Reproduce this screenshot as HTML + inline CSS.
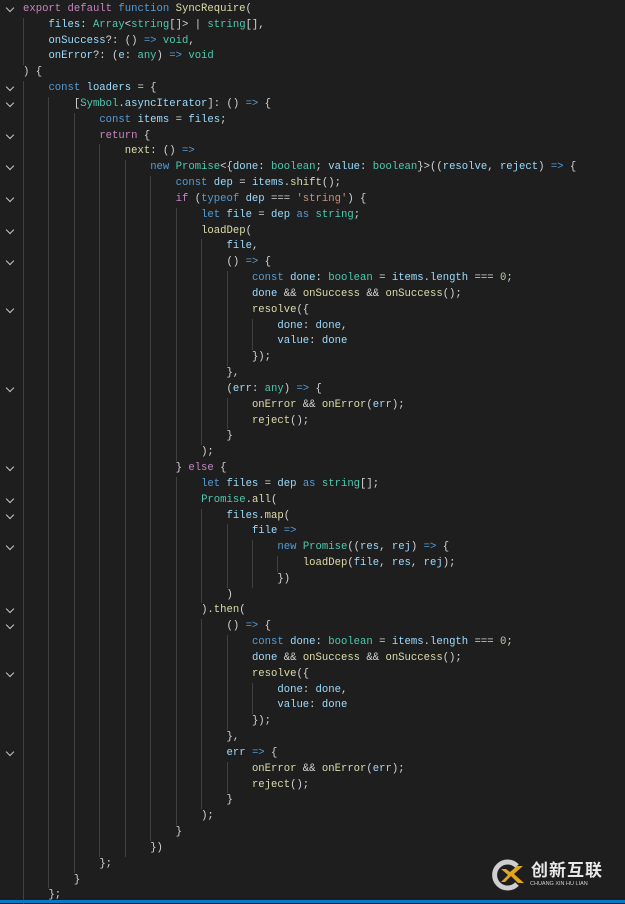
<!DOCTYPE html><html><head><meta charset="utf-8"><style>
body{margin:0;width:625px;height:903px;background:#1e1e1e;overflow:hidden;position:relative}
#c{position:absolute;left:23px;top:2px;font:10.6px/15.83px "Liberation Mono",monospace;color:#d4d4d4}
.l{height:15.83px;position:relative;white-space:pre}
.g{display:inline-block;width:25.44px;height:15.83px;border-left:1px solid #404040;box-sizing:border-box;vertical-align:top}
.k{color:#c586c0}.b{color:#569cd6}.f{color:#dcdcaa}.v{color:#9cdcfe}.t{color:#4ec9b0}.s{color:#ce9178}.n{color:#b5cea8}
.fo{position:absolute;left:-16px;top:3px;width:5px;height:5px;border-right:1.3px solid #c5c5c5;border-bottom:1.3px solid #c5c5c5;transform:rotate(45deg)}
</style></head><body>
<div id="c"><div class="l"><i class="fo"></i><span class="k">export</span> <span class="k">default</span> <span class="b">function</span> <span class="f">SyncRequire</span>(</div><div class="l"><span class="g"></span><span class="v">files</span>: <span class="t">Array</span>&lt;<span class="t">string</span>[]&gt; | <span class="t">string</span>[],</div><div class="l"><span class="g"></span><span class="v">onSuccess</span>?: () <span class="b">=&gt;</span> <span class="t">void</span>,</div><div class="l"><span class="g"></span><span class="v">onError</span>?: (<span class="v">e</span>: <span class="t">any</span>) <span class="b">=&gt;</span> <span class="t">void</span></div><div class="l">) {</div><div class="l"><i class="fo"></i><span class="g"></span><span class="b">const</span> <span class="v">loaders</span> = {</div><div class="l"><i class="fo"></i><span class="g"></span><span class="g"></span>[<span class="t">Symbol</span>.<span class="v">asyncIterator</span>]: () <span class="b">=&gt;</span> {</div><div class="l"><span class="g"></span><span class="g"></span><span class="g"></span><span class="b">const</span> <span class="v">items</span> = <span class="v">files</span>;</div><div class="l"><i class="fo"></i><span class="g"></span><span class="g"></span><span class="g"></span><span class="k">return</span> {</div><div class="l"><span class="g"></span><span class="g"></span><span class="g"></span><span class="g"></span><span class="f">next</span>: () <span class="b">=&gt;</span></div><div class="l"><i class="fo"></i><span class="g"></span><span class="g"></span><span class="g"></span><span class="g"></span><span class="g"></span><span class="b">new</span> <span class="t">Promise</span>&lt;{<span class="v">done</span>: <span class="t">boolean</span>; <span class="v">value</span>: <span class="t">boolean</span>}&gt;((<span class="v">resolve</span>, <span class="v">reject</span>) <span class="b">=&gt;</span> {</div><div class="l"><span class="g"></span><span class="g"></span><span class="g"></span><span class="g"></span><span class="g"></span><span class="g"></span><span class="b">const</span> <span class="v">dep</span> = <span class="v">items</span>.<span class="f">shift</span>();</div><div class="l"><i class="fo"></i><span class="g"></span><span class="g"></span><span class="g"></span><span class="g"></span><span class="g"></span><span class="g"></span><span class="k">if</span> (<span class="b">typeof</span> <span class="v">dep</span> === <span class="s">'string'</span>) {</div><div class="l"><span class="g"></span><span class="g"></span><span class="g"></span><span class="g"></span><span class="g"></span><span class="g"></span><span class="g"></span><span class="b">let</span> <span class="v">file</span> = <span class="v">dep</span> <span class="b">as</span> <span class="t">string</span>;</div><div class="l"><i class="fo"></i><span class="g"></span><span class="g"></span><span class="g"></span><span class="g"></span><span class="g"></span><span class="g"></span><span class="g"></span><span class="f">loadDep</span>(</div><div class="l"><span class="g"></span><span class="g"></span><span class="g"></span><span class="g"></span><span class="g"></span><span class="g"></span><span class="g"></span><span class="g"></span><span class="v">file</span>,</div><div class="l"><i class="fo"></i><span class="g"></span><span class="g"></span><span class="g"></span><span class="g"></span><span class="g"></span><span class="g"></span><span class="g"></span><span class="g"></span>() <span class="b">=&gt;</span> {</div><div class="l"><span class="g"></span><span class="g"></span><span class="g"></span><span class="g"></span><span class="g"></span><span class="g"></span><span class="g"></span><span class="g"></span><span class="g"></span><span class="b">const</span> <span class="v">done</span>: <span class="t">boolean</span> = <span class="v">items</span>.<span class="v">length</span> === <span class="n">0</span>;</div><div class="l"><span class="g"></span><span class="g"></span><span class="g"></span><span class="g"></span><span class="g"></span><span class="g"></span><span class="g"></span><span class="g"></span><span class="g"></span><span class="v">done</span> &amp;&amp; <span class="f">onSuccess</span> &amp;&amp; <span class="f">onSuccess</span>();</div><div class="l"><i class="fo"></i><span class="g"></span><span class="g"></span><span class="g"></span><span class="g"></span><span class="g"></span><span class="g"></span><span class="g"></span><span class="g"></span><span class="g"></span><span class="f">resolve</span>({</div><div class="l"><span class="g"></span><span class="g"></span><span class="g"></span><span class="g"></span><span class="g"></span><span class="g"></span><span class="g"></span><span class="g"></span><span class="g"></span><span class="g"></span><span class="v">done</span>: <span class="v">done</span>,</div><div class="l"><span class="g"></span><span class="g"></span><span class="g"></span><span class="g"></span><span class="g"></span><span class="g"></span><span class="g"></span><span class="g"></span><span class="g"></span><span class="g"></span><span class="v">value</span>: <span class="v">done</span></div><div class="l"><span class="g"></span><span class="g"></span><span class="g"></span><span class="g"></span><span class="g"></span><span class="g"></span><span class="g"></span><span class="g"></span><span class="g"></span>});</div><div class="l"><span class="g"></span><span class="g"></span><span class="g"></span><span class="g"></span><span class="g"></span><span class="g"></span><span class="g"></span><span class="g"></span>},</div><div class="l"><i class="fo"></i><span class="g"></span><span class="g"></span><span class="g"></span><span class="g"></span><span class="g"></span><span class="g"></span><span class="g"></span><span class="g"></span>(<span class="v">err</span>: <span class="t">any</span>) <span class="b">=&gt;</span> {</div><div class="l"><span class="g"></span><span class="g"></span><span class="g"></span><span class="g"></span><span class="g"></span><span class="g"></span><span class="g"></span><span class="g"></span><span class="g"></span><span class="f">onError</span> &amp;&amp; <span class="f">onError</span>(<span class="v">err</span>);</div><div class="l"><span class="g"></span><span class="g"></span><span class="g"></span><span class="g"></span><span class="g"></span><span class="g"></span><span class="g"></span><span class="g"></span><span class="g"></span><span class="f">reject</span>();</div><div class="l"><span class="g"></span><span class="g"></span><span class="g"></span><span class="g"></span><span class="g"></span><span class="g"></span><span class="g"></span><span class="g"></span>}</div><div class="l"><span class="g"></span><span class="g"></span><span class="g"></span><span class="g"></span><span class="g"></span><span class="g"></span><span class="g"></span>);</div><div class="l"><i class="fo"></i><span class="g"></span><span class="g"></span><span class="g"></span><span class="g"></span><span class="g"></span><span class="g"></span>} <span class="k">else</span> {</div><div class="l"><span class="g"></span><span class="g"></span><span class="g"></span><span class="g"></span><span class="g"></span><span class="g"></span><span class="g"></span><span class="b">let</span> <span class="v">files</span> = <span class="v">dep</span> <span class="b">as</span> <span class="t">string</span>[];</div><div class="l"><i class="fo"></i><span class="g"></span><span class="g"></span><span class="g"></span><span class="g"></span><span class="g"></span><span class="g"></span><span class="g"></span><span class="t">Promise</span>.<span class="f">all</span>(</div><div class="l"><i class="fo"></i><span class="g"></span><span class="g"></span><span class="g"></span><span class="g"></span><span class="g"></span><span class="g"></span><span class="g"></span><span class="g"></span><span class="v">files</span>.<span class="f">map</span>(</div><div class="l"><span class="g"></span><span class="g"></span><span class="g"></span><span class="g"></span><span class="g"></span><span class="g"></span><span class="g"></span><span class="g"></span><span class="g"></span><span class="v">file</span> <span class="b">=&gt;</span></div><div class="l"><i class="fo"></i><span class="g"></span><span class="g"></span><span class="g"></span><span class="g"></span><span class="g"></span><span class="g"></span><span class="g"></span><span class="g"></span><span class="g"></span><span class="g"></span><span class="b">new</span> <span class="t">Promise</span>((<span class="v">res</span>, <span class="v">rej</span>) <span class="b">=&gt;</span> {</div><div class="l"><span class="g"></span><span class="g"></span><span class="g"></span><span class="g"></span><span class="g"></span><span class="g"></span><span class="g"></span><span class="g"></span><span class="g"></span><span class="g"></span><span class="g"></span><span class="f">loadDep</span>(<span class="v">file</span>, <span class="v">res</span>, <span class="v">rej</span>);</div><div class="l"><span class="g"></span><span class="g"></span><span class="g"></span><span class="g"></span><span class="g"></span><span class="g"></span><span class="g"></span><span class="g"></span><span class="g"></span><span class="g"></span>})</div><div class="l"><span class="g"></span><span class="g"></span><span class="g"></span><span class="g"></span><span class="g"></span><span class="g"></span><span class="g"></span><span class="g"></span>)</div><div class="l"><i class="fo"></i><span class="g"></span><span class="g"></span><span class="g"></span><span class="g"></span><span class="g"></span><span class="g"></span><span class="g"></span>).<span class="f">then</span>(</div><div class="l"><i class="fo"></i><span class="g"></span><span class="g"></span><span class="g"></span><span class="g"></span><span class="g"></span><span class="g"></span><span class="g"></span><span class="g"></span>() <span class="b">=&gt;</span> {</div><div class="l"><span class="g"></span><span class="g"></span><span class="g"></span><span class="g"></span><span class="g"></span><span class="g"></span><span class="g"></span><span class="g"></span><span class="g"></span><span class="b">const</span> <span class="v">done</span>: <span class="t">boolean</span> = <span class="v">items</span>.<span class="v">length</span> === <span class="n">0</span>;</div><div class="l"><span class="g"></span><span class="g"></span><span class="g"></span><span class="g"></span><span class="g"></span><span class="g"></span><span class="g"></span><span class="g"></span><span class="g"></span><span class="v">done</span> &amp;&amp; <span class="f">onSuccess</span> &amp;&amp; <span class="f">onSuccess</span>();</div><div class="l"><i class="fo"></i><span class="g"></span><span class="g"></span><span class="g"></span><span class="g"></span><span class="g"></span><span class="g"></span><span class="g"></span><span class="g"></span><span class="g"></span><span class="f">resolve</span>({</div><div class="l"><span class="g"></span><span class="g"></span><span class="g"></span><span class="g"></span><span class="g"></span><span class="g"></span><span class="g"></span><span class="g"></span><span class="g"></span><span class="g"></span><span class="v">done</span>: <span class="v">done</span>,</div><div class="l"><span class="g"></span><span class="g"></span><span class="g"></span><span class="g"></span><span class="g"></span><span class="g"></span><span class="g"></span><span class="g"></span><span class="g"></span><span class="g"></span><span class="v">value</span>: <span class="v">done</span></div><div class="l"><span class="g"></span><span class="g"></span><span class="g"></span><span class="g"></span><span class="g"></span><span class="g"></span><span class="g"></span><span class="g"></span><span class="g"></span>});</div><div class="l"><span class="g"></span><span class="g"></span><span class="g"></span><span class="g"></span><span class="g"></span><span class="g"></span><span class="g"></span><span class="g"></span>},</div><div class="l"><i class="fo"></i><span class="g"></span><span class="g"></span><span class="g"></span><span class="g"></span><span class="g"></span><span class="g"></span><span class="g"></span><span class="g"></span><span class="v">err</span> <span class="b">=&gt;</span> {</div><div class="l"><span class="g"></span><span class="g"></span><span class="g"></span><span class="g"></span><span class="g"></span><span class="g"></span><span class="g"></span><span class="g"></span><span class="g"></span><span class="f">onError</span> &amp;&amp; <span class="f">onError</span>(<span class="v">err</span>);</div><div class="l"><span class="g"></span><span class="g"></span><span class="g"></span><span class="g"></span><span class="g"></span><span class="g"></span><span class="g"></span><span class="g"></span><span class="g"></span><span class="f">reject</span>();</div><div class="l"><span class="g"></span><span class="g"></span><span class="g"></span><span class="g"></span><span class="g"></span><span class="g"></span><span class="g"></span><span class="g"></span>}</div><div class="l"><span class="g"></span><span class="g"></span><span class="g"></span><span class="g"></span><span class="g"></span><span class="g"></span><span class="g"></span>);</div><div class="l"><span class="g"></span><span class="g"></span><span class="g"></span><span class="g"></span><span class="g"></span><span class="g"></span>}</div><div class="l"><span class="g"></span><span class="g"></span><span class="g"></span><span class="g"></span><span class="g"></span>})</div><div class="l"><span class="g"></span><span class="g"></span><span class="g"></span>};</div><div class="l"><span class="g"></span><span class="g"></span>}</div><div class="l"><span class="g"></span>};</div></div>
<svg style="position:absolute;left:490px;top:857px" width="36" height="36" viewBox="0 0 36 36">
<path d="M27 9A13 13 0 1 0 27 27" fill="none" stroke="#cfcfcf" stroke-width="5"/>
<path d="M11 12L18 18L11 25L15 25L21 19L28 26L34 26L24 17L33 9L27 9L20 15L16 12Z" fill="#e0a521"/>
</svg>
<div style="position:absolute;left:531px;top:859px;color:#e8e8e8;font:bold 17px/20px 'Noto Sans CJK SC',sans-serif;letter-spacing:1px">创新互联</div>
<div style="position:absolute;left:530px;top:881px;color:#cfcfcf;font:5.5px/7px 'Liberation Sans',sans-serif;white-space:nowrap">CHUANG XIN HU LIAN</div>
<div style="position:absolute;left:0;top:900px;width:625px;height:3px;background:#0a78c8"></div>
</body></html>
